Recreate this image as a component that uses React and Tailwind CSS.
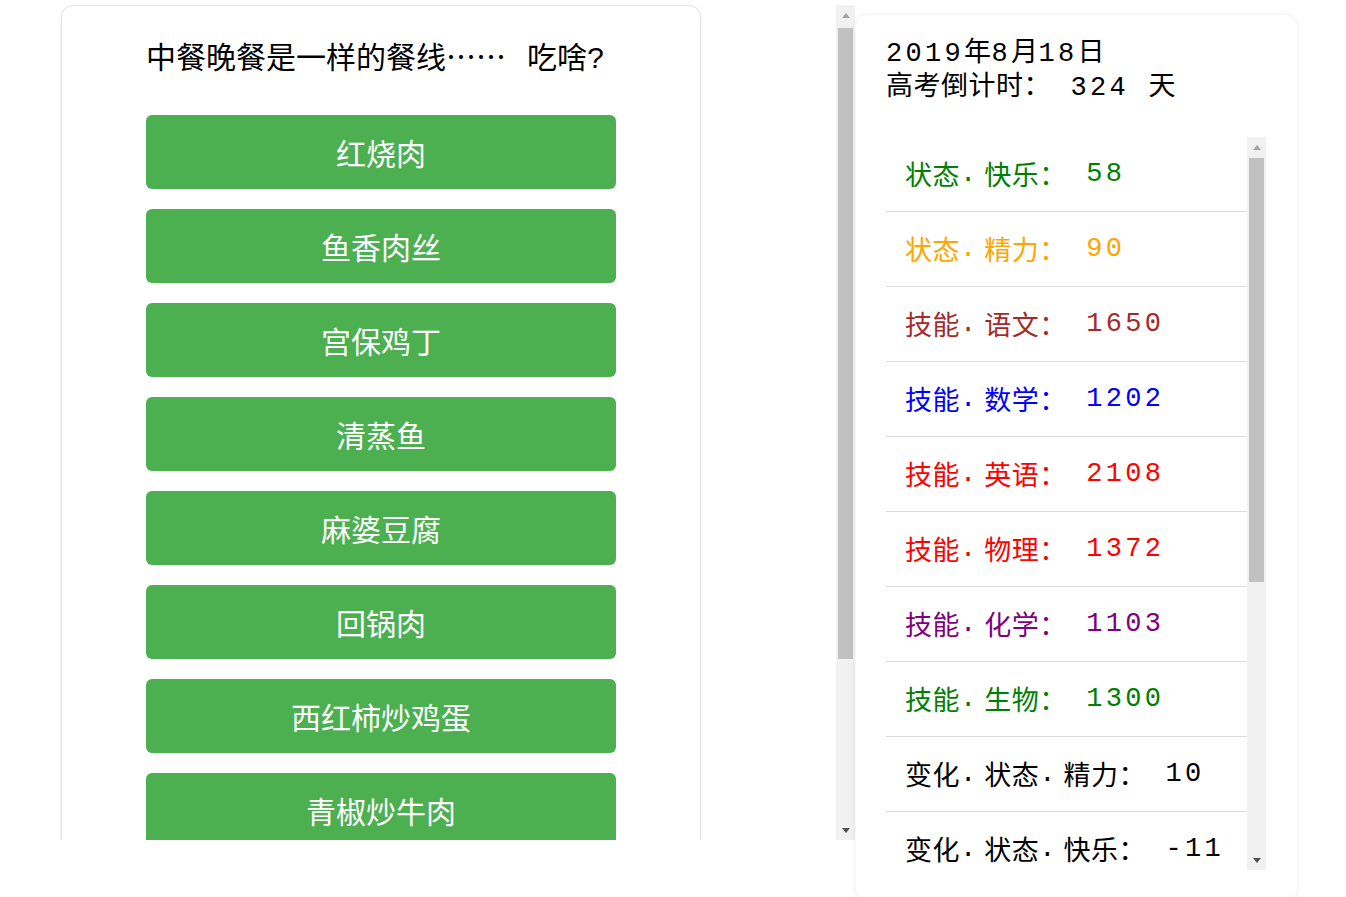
import React from 'react';

const dishes = ['红烧肉', '鱼香肉丝', '宫保鸡丁', '清蒸鱼', '麻婆豆腐', '回锅肉', '西红柿炒鸡蛋', '青椒炒牛肉', '水煮鱼', '酸菜鱼'];

const stats = [
    { label: '状态.快乐', value: '58', color: 'text-[#008000]' },
    { label: '状态.精力', value: '90', color: 'text-[#ffa500]' },
    { label: '技能.语文', value: '1650', color: 'text-[#a52a2a]' },
    { label: '技能.数学', value: '1202', color: 'text-[#0000ff]' },
    { label: '技能.英语', value: '2108', color: 'text-[#ff0000]' },
    { label: '技能.物理', value: '1372', color: 'text-[#ff0000]' },
    { label: '技能.化学', value: '1103', color: 'text-[#800080]' },
    { label: '技能.生物', value: '1300', color: 'text-[#008000]' },
    { label: '变化.状态.精力', value: '10', color: 'text-black' },
    { label: '变化.状态.快乐', value: '-11', color: 'text-black' },
    { label: '变化.技能.语文', value: '5', color: 'text-black' },
    { label: '变化.技能.数学', value: '3', color: 'text-black' },
];

const cjk = "font-['Noto_Sans_CJK_SC',sans-serif]";
const mono = "font-['Liberation_Mono','Noto_Sans_CJK_SC',monospace]";

// ascii bits in the original font are wider than a half cell
const Num = ({ children, className = '' }) => (
    <span className={`${mono} tracking-[3.3px] whitespace-pre ${className}`}>{children}</span>
);

const Label = ({ text }) => (
    <>
        {text.split('.').map((part, i) => (
            <React.Fragment key={i}>
                {i > 0 && <span className={`${mono} tracking-[8px]`}>.</span>}
                {part}
            </React.Fragment>
        ))}
    </>
);

const Arrow = ({ down, active }) => (
    <svg width="8" height="5" viewBox="0 0 8 5" className={down ? 'rotate-180' : ''}>
        <path d="M0 5 L4 0 L8 5 Z" fill={active ? '#505050' : '#a3a3a3'} />
    </svg>
);

const Scrollbar = ({ className, thumbClass }) => (
    <div className={`flex flex-col bg-[#f1f1f1] shrink-0 ${className}`}>
        <div className="h-[20px] flex items-center justify-center">
            <Arrow />
        </div>
        <div className="flex-1 px-[2px]">
            <div className={`bg-[#c1c1c1] ${thumbClass}`}></div>
        </div>
        <div className="h-[20px] flex items-center justify-center">
            <Arrow down active />
        </div>
    </div>
);

const App = () => {
    return (
        <div className="w-[1346px] h-[897px] bg-white overflow-hidden flex">
            {/* left scroll area with menu */}
            <div className="flex w-[855px] h-[835px] mt-[5px] shrink-0">
                <div className="flex-1 overflow-hidden pl-[61px]">
                    <div className="w-[640px] bg-white border border-[#e4e4e4] rounded-[12px] shadow-[0_0_4px_rgba(0,0,0,0.05)] pt-[29px] pb-[40px]">
                        <div className={`${cjk} h-[40px] text-[30px] leading-[40px] text-black text-center pr-[8px] whitespace-nowrap`}>
                            中餐晚餐是一样的餐线……<Num className="tracking-[3px]"> </Num>吃啥<Num className="tracking-[3px]">?</Num>
                        </div>
                        <div className="mt-[40px] flex flex-col items-center gap-[20px]">
                            {dishes.map((dish) => (
                                <button
                                    key={dish}
                                    className={`${cjk} w-[470px] h-[74px] rounded-[6px] bg-[#4caf50] text-white text-[30px] leading-none flex items-center justify-center`}
                                >
                                    {dish}
                                </button>
                            ))}
                        </div>
                    </div>
                </div>
                <Scrollbar className="w-[19px]" thumbClass="mt-[3px] h-[631px]" />
            </div>

            {/* right status card */}
            <div className="ml-px mt-[15px] w-[441px] h-[885px] shrink-0 rounded-[12px] bg-white shadow-[0_0_6px_rgba(0,0,0,0.08)] pl-[30px] pr-[31px] pt-[18px]">
                <div className={`${cjk} text-[27px] leading-[34px] tracking-[0.5px] text-black`}>
                    <div className="h-[34px] whitespace-nowrap">
                        <Num>2019</Num>年<Num>8</Num>月<Num>18</Num>日
                    </div>
                    <div className="h-[34px] whitespace-nowrap">
                        高考倒计时：<Num> 324 </Num>天
                    </div>
                </div>
                <div className="mt-[36px] h-[733px] flex">
                    <div className="flex-1 overflow-hidden">
                        {stats.map((s) => (
                            <div
                                key={s.label}
                                className={`${cjk} ${s.color} h-[75px] border-b border-[#dddddd] pl-[19px] flex items-center text-[27px] tracking-[0.5px] whitespace-nowrap`}
                            >
                                <Label text={s.label} />：<Num>{' ' + s.value}</Num>
                            </div>
                        ))}
                    </div>
                    <Scrollbar className="w-[19px]" thumbClass="mt-px h-[424px]" />
                </div>
            </div>
        </div>
    );
};

export default App;
